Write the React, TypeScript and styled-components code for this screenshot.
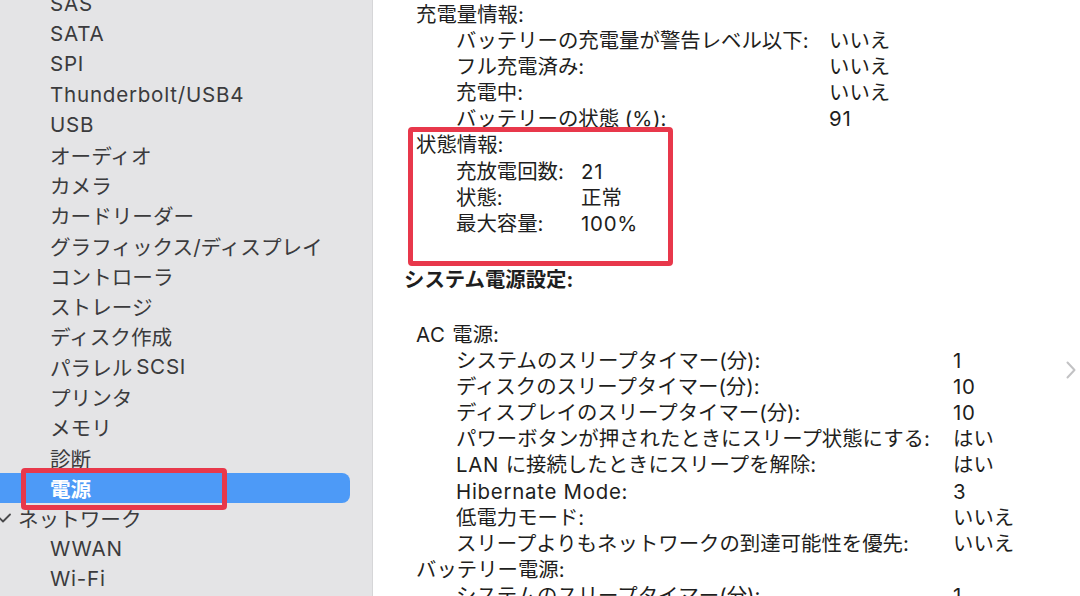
import styled, { createGlobalStyle } from 'styled-components'

const GlobalStyle = createGlobalStyle`
  html, body {
    margin: 0;
    padding: 0;
  }
  body {
    width: 1080px;
    height: 596px;
    overflow: hidden;
    background: #fff;
    font-family: Inter, "Noto Sans CJK JP", sans-serif;
  }
`

type SideItem = { label: string; parent?: boolean; selected?: boolean }

const sideItems: SideItem[] = [
  { label: 'SAS' },
  { label: 'SATA' },
  { label: 'SPI' },
  { label: 'Thunderbolt/USB4' },
  { label: 'USB' },
  { label: 'オーディオ' },
  { label: 'カメラ' },
  { label: 'カードリーダー' },
  { label: 'グラフィックス/ディスプレイ' },
  { label: 'コントローラ' },
  { label: 'ストレージ' },
  { label: 'ディスク作成' },
  { label: 'パラレル\u2009SCSI' },
  { label: 'プリンタ' },
  { label: 'メモリ' },
  { label: '診断' },
  { label: '電源', selected: true },
  { label: 'ネットワーク', parent: true },
  { label: 'WWAN' },
  { label: 'Wi-Fi' },
]

type Entry = [string, string]

const chargeInfo: Entry[] = [
  ['バッテリーの充電量が警告レベル以下:', 'いいえ'],
  ['フル充電済み:', 'いいえ'],
  ['充電中:', 'いいえ'],
  ['バッテリーの状態 (%):', '91'],
]

const healthInfo: Entry[] = [
  ['充放電回数:', '21'],
  ['状態:', '正常'],
  ['最大容量:', '100%'],
]

const acPower: Entry[] = [
  ['システムのスリープタイマー(分):', '1'],
  ['ディスクのスリープタイマー(分):', '10'],
  ['ディスプレイのスリープタイマー(分):', '10'],
  ['パワーボタンが押されたときにスリープ状態にする:', 'はい'],
  ['LAN に接続したときにスリープを解除:', 'はい'],
  ['Hibernate Mode:', '3'],
  ['低電力モード:', 'いいえ'],
  ['スリープよりもネットワークの到達可能性を優先:', 'いいえ'],
]

const batteryPower: Entry[] = [
  ['システムのスリープタイマー(分):', '1'],
]

//          function: 英数字だけ字間を広げる (SF Pro の幅に寄せる)          //
const Txt = ({ text }: { text: string }) => (
  <>
    {text.split(/([A-Za-z0-9%][A-Za-z0-9% /\-]*)/).map((part, i) =>
      i % 2 === 1 ? <Latin key={i}>{part}</Latin> : part
    )}
  </>
)

//          component: 情報グループ          //
const InfoGroup = ({ title, entries, labelWidth, marked }: { title: string; entries: Entry[]; labelWidth: number; marked?: boolean }) => (
  <Group>
    {marked && <Annotation />}
    <GroupTitle><Txt text={title} /></GroupTitle>
    <GroupBody $labelWidth={labelWidth}>
      {entries.map(([label, value], i) => (
        <Pair key={i}>
          <Label><Txt text={label} /></Label>
          <Value><Txt text={value} /></Value>
        </Pair>
      ))}
    </GroupBody>
  </Group>
)

export default function App() {
  return (
    <>
      <GlobalStyle />
      <Window>
        <Sidebar>
          <SideList>
            {sideItems.map((item) => (
              <SideRow key={item.label} $parent={item.parent} $selected={item.selected}>
                {item.parent && (
                  <Disclosure viewBox="0 0 16 10">
                    <polyline points="1,1.5 8,8.5 15,1.5" />
                  </Disclosure>
                )}
                <Txt text={item.label} />
                {item.selected && <SelectMark />}
              </SideRow>
            ))}
          </SideList>
        </Sidebar>
        <Main>
          <InfoGroup title="充電量情報:" entries={chargeInfo} labelWidth={373} />
          <InfoGroup title="状態情報:" entries={healthInfo} labelWidth={125} marked />
          <Heading>システム電源設定:</Heading>
          <InfoGroup title="AC 電源:" entries={acPower} labelWidth={497} />
          <InfoGroup title="バッテリー電源:" entries={batteryPower} labelWidth={497} />
          <ScrollHint viewBox="0 0 10 18">
            <polyline points="1.5,1.5 8.5,9 1.5,16.5" />
          </ScrollHint>
        </Main>
      </Window>
    </>
  )
}

const Window = styled.div`
  display: flex;
  width: 1080px;
  height: 596px;
  overflow: hidden;
`

const Latin = styled.span`
  letter-spacing: 0.75px;
`

const Sidebar = styled.div`
  flex: none;
  width: 372px;
  height: 100%;
  overflow: hidden;
  background: #e4e4e6;
  border-right: 1px solid #d6d6d8;
`

const SideList = styled.div`
  display: flex;
  flex-direction: column;
  margin-top: -12px;
  font-size: 20.6px;
  color: #3b3b3d;
`

const SideRow = styled.div<{ $parent?: boolean; $selected?: boolean }>`
  position: relative;
  display: flex;
  align-items: center;
  height: 30.3px;
  white-space: pre;
  padding-left: ${(p) => (p.$parent ? '0' : '50px')};
  ${(p) =>
    p.$selected &&
    `
    margin-left: -10px;
    margin-right: 22px;
    padding-left: 60px;
    border-radius: 8px;
    background: #4d9af7;
    color: #fff;
    font-weight: 600;
  `}
`

const Disclosure = styled.svg`
  flex: none;
  width: 16px;
  height: 10px;
  margin-left: -5px;
  margin-right: 7px;
  fill: none;
  stroke: #4a4a4c;
  stroke-width: 1.8;
  stroke-linecap: round;
  stroke-linejoin: round;
`

const SelectMark = styled.div`
  position: absolute;
  left: 31px;
  top: -5px;
  width: 206px;
  height: 42px;
  box-sizing: border-box;
  border: 5px solid #e8384b;
  border-radius: 4px;
`

const Main = styled.div`
  position: relative;
  flex: 1;
  padding: 2px 0 0 31px;
  overflow: hidden;
  color: #1e1e20;
  font-size: 20.4px;
  line-height: 26.1px;
`

const Group = styled.div`
  position: relative;
  margin-left: 12px;
`

const GroupTitle = styled.div`
  white-space: pre;
`

const GroupBody = styled.div<{ $labelWidth: number }>`
  display: grid;
  grid-template-columns: ${(p) => p.$labelWidth}px max-content;
  padding-left: 40px;
`

const Pair = styled.div`
  display: contents;
`

const Label = styled.span`
  white-space: pre;
`

const Value = styled.span`
  white-space: pre;
`

const Annotation = styled.div`
  position: absolute;
  left: -8px;
  top: -5px;
  width: 265px;
  height: 139px;
  box-sizing: border-box;
  border: 5px solid #e8384b;
  border-radius: 4px;
`

const Heading = styled.div`
  margin: 30px 0 29px;
  font-weight: 700;
  white-space: nowrap;
`

const ScrollHint = styled.svg`
  position: absolute;
  right: 4px;
  top: 361px;
  width: 10px;
  height: 18px;
  fill: none;
  stroke: #c2c2c4;
  stroke-width: 2;
  stroke-linecap: round;
  stroke-linejoin: round;
`
